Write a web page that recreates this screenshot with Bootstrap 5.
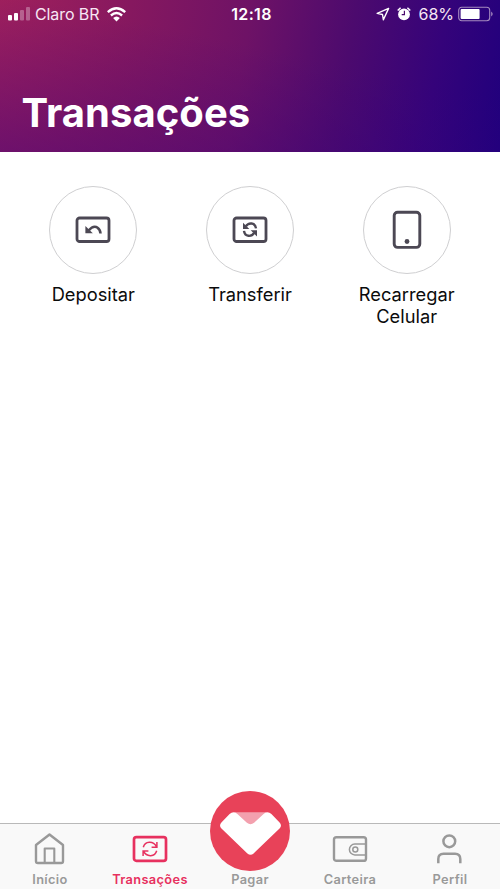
<!DOCTYPE html>
<html lang="pt-BR">
<head>
<meta charset="utf-8">
<meta name="viewport" content="width=device-width, initial-scale=1">
<title>Transações</title>
<link href="https://cdn.jsdelivr.net/npm/bootstrap@5.3.0/dist/css/bootstrap.min.css" rel="stylesheet">
<style>
body{font-family:Inter,"Liberation Sans",sans-serif;height:889px;color:#0b0b0b;overflow:hidden}
svg{display:block;flex:none}
.hero{height:152px;background:linear-gradient(100deg,#a0205c 0%,#86185f 25%,#6e1266 48%,#4c0a6e 68%,#35037a 85%,#20007d 100%)}
.hero-shade{background:linear-gradient(12deg,rgba(55,0,125,.45) 0%,rgba(55,0,125,0) 62%)}
.status{height:28px;padding:0 7px 0 8px;font-size:16px;line-height:28px;color:#f7e6f4}
.side{flex:1 1 0}
.carrier{letter-spacing:-.1px}
.clock{font-weight:600;letter-spacing:.35px;color:#fff;margin-left:2px}
.alarm{margin-left:7px}
.percent{margin-left:7.5px}
.battery{margin-left:4px;margin-right:-1px}
.title{font-size:40px;line-height:48px;font-weight:700;letter-spacing:.05px;margin:61px 0 0 21.5px}
.actions{padding:34.4px 15px 0}
.ring{width:88px;height:88px;border:1px solid #cfcfd1}
.action-name{font-size:18.3px;line-height:22px;margin-top:8.4px}
.tabs{height:66px;background:#f9f9f9;border-top:1px solid #b9b9b9;color:#999}
.tab{flex:1 0 0;height:65px;padding-top:8px}
.tab-name{font-size:12.8px;line-height:16px;font-weight:600;letter-spacing:.35px;margin-top:5.5px}
.current{color:#e7315f}
.pay{width:80px;height:80px;margin-top:-41px;margin-bottom:3px}
.pay + .tab-name{margin-top:-2.5px}
</style>
<script src="https://cdn.jsdelivr.net/npm/bootstrap@5.3.0/dist/js/bootstrap.bundle.min.js"></script>
</head>
<body class="d-flex flex-column bg-white">
<header class="hero text-white">
 <div class="hero-shade h-100 overflow-hidden">
  <div class="status d-flex align-items-center">
   <div class="side d-flex align-items-center">
    <svg width="23" height="14" viewBox="0 0 23 14"><g fill="#fff"><rect y="8" width="4" height="5.5" rx="1"/><rect x="6" y="6" width="4" height="7.5" rx="1"/><g opacity=".3"><rect x="12" y="3" width="4" height="10.5" rx="1"/><rect x="18" y="0" width="4" height="13.5" rx="1"/></g></g></svg>
    <span class="carrier ms-1">Claro BR</span>
    <svg class="ms-2" width="19" height="15" viewBox="0 0 19 15" fill="none" stroke="#fff" stroke-width="2.4"><path d="M.8 5.2Q9.5-2.5 18.2 5.2"/><path d="M3.9 8.5Q9.5 3.6 15.1 8.5"/><path d="M9.5 14.4 6.1 11Q9.5 8 12.9 11z" fill="#fff" stroke="none"/></svg>
   </div>
   <span class="clock">12:18</span>
   <div class="side d-flex align-items-center justify-content-end">
    <svg width="14" height="14" viewBox="0 0 14 14" fill="none" stroke="#fff" stroke-width="1.4" stroke-linejoin="round"><path d="M12.6 1.4 1.2 6.4l5.3 1.1.9 5.3z"/></svg>
    <svg class="alarm" width="14" height="14" viewBox="0 0 14 14"><circle cx="7" cy="7.4" r="5.9" fill="#fff"/><path d="M.7 3.5 3.6.8M13.3 3.5 10.4.8" stroke="#fff" stroke-width="1.5"/><path d="M7.4 3.7v4H4.7" fill="none" stroke="#4b0a6e" stroke-width="1.2"/></svg>
    <span class="percent">68%</span>
    <svg class="battery" width="36" height="16" viewBox="0 0 36 16"><rect x=".7" y="1.2" width="31" height="13.6" rx="3" fill="none" stroke="#a58abf" stroke-width="1.1"/><rect x="2.6" y="3.1" width="19" height="9.8" rx="1" fill="#fff"/><path d="M33.2 5.5q3 2.5 0 5z" fill="#a58abf"/></svg>
   </div>
  </div>
  <h1 class="title">Transações</h1>
 </div>
</header>
<main class="actions flex-grow-1">
 <div class="row g-0 text-center">
  <div class="col d-flex flex-column align-items-center">
   <div class="ring rounded-circle d-flex align-items-center justify-content-center"><svg width="36" height="28" viewBox="0 0 36 28" fill="none" stroke="#4c4854" stroke-width="2.8"><rect x="2" y="2" width="32" height="23.5" rx="2.6"/><path d="M13.6 14.5Q18.5 8.8 22.7 11.8 25.2 13.4 25.5 17.5" stroke-width="2.6"/><path d="M10.4 10v7.2h7.4z" fill="#4c4854" stroke="none"/></svg></div>
   <div class="action-name">Depositar</div>
  </div>
  <div class="col d-flex flex-column align-items-center">
   <div class="ring rounded-circle d-flex align-items-center justify-content-center"><svg width="36" height="28" viewBox="0 0 36 28" fill="none" stroke="#4c4854" stroke-width="2.8"><rect x="2" y="2" width="32" height="23.5" rx="2.6"/><g stroke-width="2.4"><path d="M13.8 10.4C16.5 6.2 23.2 6.2 24 12.4"/><path d="M22.2 16.9C19.5 21.1 12.8 21.1 12 14.9"/></g><path d="M11 6.8v6.3h6.3zM25 20.5v-6.3h-6.3z" fill="#4c4854" stroke="none"/></svg></div>
   <div class="action-name">Transferir</div>
  </div>
  <div class="col d-flex flex-column align-items-center">
   <div class="ring rounded-circle d-flex align-items-center justify-content-center"><svg width="30" height="40" viewBox="0 0 30 40" fill="none" stroke="#4c4854" stroke-width="2.9"><rect x="2.2" y="2.2" width="25.6" height="35.2" rx="3.4"/><circle cx="15" cy="31.5" r="2.4" fill="#4c4854" stroke="none"/></svg></div>
   <div class="action-name">Recarregar<br>Celular</div>
  </div>
 </div>
</main>
<nav class="tabs d-flex">
 <div class="tab d-flex flex-column align-items-center"><svg width="34" height="34" viewBox="0 0 34 34" fill="none" stroke="currentColor" stroke-width="2.4" stroke-linejoin="round"><path d="M16.5 2.5 3 13v16.2q0 1.8 1.8 1.8h23.4q1.8 0 1.8-1.8V13z"/><path d="M11.7 31V16.5h9.6V31" stroke-width="2.1"/></svg><span class="tab-name">Início</span></div>
 <div class="tab current d-flex flex-column align-items-center"><svg width="36" height="34" viewBox="0 0 36 34" fill="none" stroke="currentColor" stroke-width="2.7"><rect x="2" y="5.2" width="32" height="23.6" rx="2.4"/><g stroke-width="1.5"><path d="M11.3 15.2C13 9.2 21 8.3 24.6 14.8M24.9 10.1v5.1h-5.3M24.7 18.8C23 24.8 15 25.7 11.4 19.2M11.1 24.1V19h5.3"/></g></svg><span class="tab-name">Transações</span></div>
 <div class="tab d-flex flex-column align-items-center"><svg class="pay" viewBox="0 0 80 80"><circle cx="40" cy="40" r="40" fill="#e84259"/><path d="M24 21.3h33L40.5 36z" fill="#f3a0ae"/><path d="M23.6 21.3q2.2 0 3.8 1.6l9.5 8.9q3.6 2.8 7.2 0l9.5-8.9q1.6-1.6 3.8-1.6t4 1.6l8.2 8.5q2.6 3 .2 5.8L43.6 62.4q-3.1 2.8-6.2 0L11.2 37.2q-2.4-2.8.2-5.8l8.2-8.5q1.8-1.6 4-1.6z" fill="#fff"/></svg><span class="tab-name">Pagar</span></div>
 <div class="tab d-flex flex-column align-items-center"><svg width="36" height="34" viewBox="0 0 36 34" fill="none" stroke="currentColor" stroke-width="2.4"><rect x="2" y="5.2" width="32" height="23.6" rx="2.4"/><path d="M34 12.1H22.8a5.4 5.4 0 0 0 0 10.8H34" stroke-width="1.5"/><circle cx="23.3" cy="17.5" r="2.5" stroke-width="1.5"/></svg><span class="tab-name">Carteira</span></div>
 <div class="tab d-flex flex-column align-items-center"><svg width="34" height="34" viewBox="0 0 34 34" fill="none" stroke="currentColor" stroke-width="2.5"><circle cx="16.3" cy="9.3" r="5.9"/><path d="M5.3 31.3V27q0-5.3 5.3-5.3H22Q27.3 21.7 27.3 27v4.3"/></svg><span class="tab-name">Perfil</span></div>
</nav>
</body>
</html>
